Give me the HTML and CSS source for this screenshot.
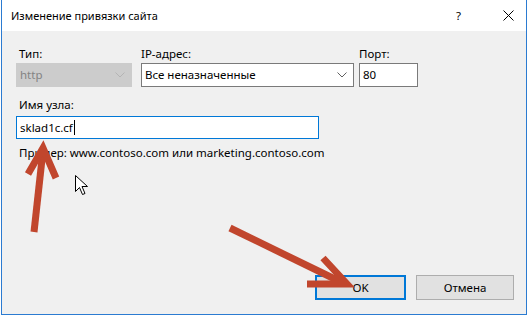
FILE: index.html
```html
<!DOCTYPE html>
<html lang="ru">
<head>
  <meta charset="UTF-8">
  <title>Изменение привязки сайта</title>
  <link rel="stylesheet" href="styles.css">
</head>
<body>
  <div class="window">
    <!-- Title bar -->
    <div class="titlebar">
      <span class="title">Изменение привязки сайта</span>
      <span class="help">?</span>
      <svg class="close" width="11" height="11" viewBox="0 0 11 11">
        <path d="M0.5 0.5 L10.5 10.5 M10.5 0.5 L0.5 10.5" stroke="#000" stroke-width="1" fill="none"/>
      </svg>
    </div>

    <!-- Dialog content -->
    <div class="content">
      <div class="row-top">
        <div class="field f-type">
          <label class="lbl lbl-indent">Тип:</label>
          <div class="select disabled">
            <span>http</span>
            <svg class="chev" width="10" height="6" viewBox="0 0 10 6"><path d="M0.5 0.5 L5 5 L9.5 0.5" stroke="#b4b4b4" fill="none"/></svg>
          </div>
        </div>
        <div class="field f-ip">
          <label class="lbl">IP-адрес:</label>
          <div class="select">
            <span>Все неназначенные</span>
            <svg class="chev" width="10" height="6" viewBox="0 0 10 6"><path d="M0.5 0.5 L5 5 L9.5 0.5" stroke="#606060" fill="none"/></svg>
          </div>
        </div>
        <div class="field f-port">
          <label class="lbl">Порт:</label>
          <div class="input">80</div>
        </div>
      </div>

      <div class="field f-host">
        <label class="lbl lbl-indent">Имя узла:</label>
        <div class="input focused">sklad1c.cf<span class="caret"></span></div>
      </div>

      <p class="hint">Пример: www.contoso.com или marketing.contoso.com</p>

      <div class="buttons">
        <button class="btn btn-default">OK</button>
        <button class="btn btn-cancel">Отмена</button>
      </div>
    </div>
  </div>

  <!-- Annotation arrows and mouse pointer drawn over the dialog -->
  <svg class="overlay" width="528" height="316" viewBox="0 0 528 316">
    <g stroke="#c1462d" stroke-width="7" fill="none" stroke-linejoin="miter">
      <path d="M34 232 L43 150"/>
      <path d="M28 174 L43 148 L56 178"/>
      <path d="M230 228 L343 283"/>
      <path d="M323 258 L347 284 L307 284"/>
    </g>
    <path d="M75.5 175.5 L75.5 191.5 L79.5 187.5 L82.5 194.5 L85 193.5 L82 186.5 L87.5 186.5 Z" fill="#fff" stroke="#000" stroke-width="1"/>
  </svg>
</body>
</html>
```

FILE: styles.css
```css
body {
  margin: 0;
  width: 528px;
  height: 316px;
  background: #ffffff;
  font-family: 'Noto Sans', 'Open Sans', sans-serif;
  font-size: 11.5px;
  line-height: 16px;
  color: #000000;
  position: relative;
  overflow: hidden;
}
.window {
  margin-left: 1px;
  width: 526px;
  height: 315px;
  box-sizing: border-box;
  border-left: 1px solid #2b7bd1;
  border-right: 1px solid #2b7bd1;
  border-bottom: 1px solid #2b7bd1;
  display: flex;
  flex-direction: column;
}
.titlebar {
  height: 31px;
  flex: none;
  background: #ffffff;
  display: flex;
  align-items: center;
  padding-left: 9px;
}
.title {
  flex: 1;
  font-size: 11px;
}
.help {
  width: 10px;
  margin-right: 37px;
}
.close {
  margin-right: 12px;
}
.content {
  flex: 1;
  background: #f0f0f0;
  display: flex;
  flex-direction: column;
  padding: 15px 12px 14px 14px;
}
.row-top {
  display: flex;
}
.field {
  display: flex;
  flex-direction: column;
}
.f-type {
  width: 116px;
  margin-right: 9px;
}
.f-ip {
  width: 213px;
  margin-right: 5px;
}
.f-port {
  width: 59px;
}
.lbl {
  margin-bottom: 1px;
}
.lbl-indent {
  padding-left: 3px;
}
.select,
.input {
  box-sizing: border-box;
  height: 24px;
  border: 1px solid #7a7a7a;
  background: #ffffff;
  display: flex;
  align-items: center;
  padding-left: 3px;
}
.select span {
  flex: 1;
}
.select .chev {
  margin-right: 6px;
}
.select.disabled {
  background: #cccccc;
  border-color: #cccccc;
  color: #838383;
}
.f-host {
  margin-top: 10px;
  width: 303px;
}
.f-host .lbl {
  margin-bottom: 3px;
}
.input.focused {
  height: 23px;
  border-color: #0078d7;
}
.caret {
  width: 1px;
  height: 15px;
  background: #000000;
  margin-left: 1px;
}
.hint {
  margin: 6px 0 0 3px;
}
.buttons {
  margin-top: auto;
  display: flex;
  justify-content: flex-end;
  gap: 10px;
}
.btn {
  font-family: inherit;
  font-size: 11.5px;
  height: 25px;
  box-sizing: border-box;
  background: #e1e1e1;
  border: 1px solid #adadad;
  color: #000000;
  padding: 0;
}
.btn-default {
  width: 91px;
  border: 2px solid #0078d7;
}
.btn-cancel {
  width: 98px;
}
.overlay {
  position: absolute;
  left: 0;
  top: 0;
  pointer-events: none;
}
```
